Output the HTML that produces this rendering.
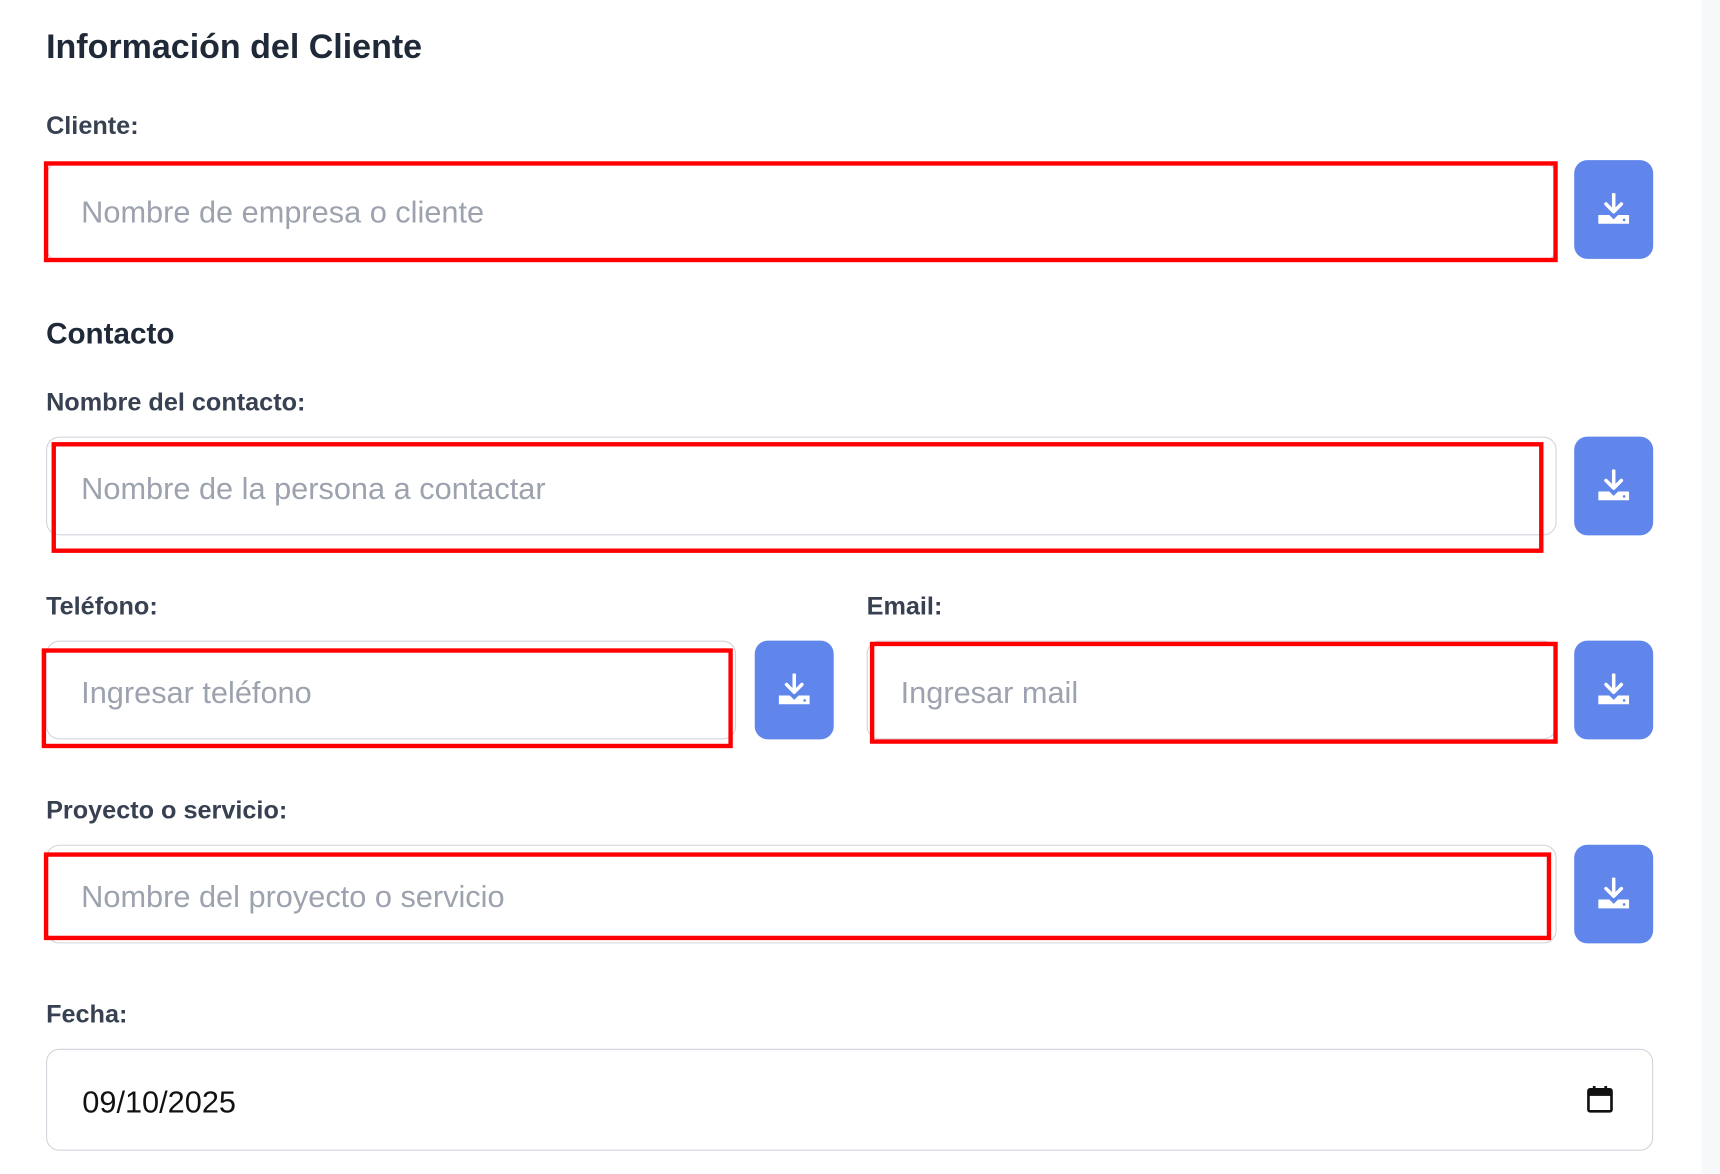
<!DOCTYPE html>
<html><head><meta charset="utf-8"><style>
html,body{margin:0;padding:0;background:#fff;overflow:hidden;width:1720px;height:1168px}
#w{position:absolute;left:0;top:0;width:1568px;height:1065px;transform:scale(1.097);transform-origin:0 0;font-family:"Liberation Sans",sans-serif}
.strip{position:absolute;left:1551px;top:0;width:20px;height:1070px;background:#f7f8fa}
.a{position:absolute}
.h1{font-size:31px;font-weight:600;color:#1f2937}
.h2{font-size:27px;font-weight:600;color:#1f2937}
.lb{font-size:23px;font-weight:600;color:#374151}
.in{position:absolute;border:1.5px solid #d1d5db;border-radius:12px;box-sizing:border-box;background:#fff}
.ph{position:absolute;font-size:28px;color:#9ca3af}
.red{position:absolute;border:4px solid #ff0000;box-sizing:border-box}
.bt{position:absolute;width:72px;height:90px;border-radius:12px;background:#6086ec}
.bt svg{position:absolute;left:21px;top:30px}
</style></head><body><div id="w">
<div class="strip"></div>
<div class="a h1" style="left:42px;top:25px">Información del Cliente</div>
<div class="a lb" style="left:42px;top:101px">Cliente:</div>
<div class="in" style="left:42px;top:148px;width:1377px;height:90px"></div>
<div class="ph" style="left:74px;top:178px">Nombre de empresa o cliente</div>
<div class="red" style="left:40px;top:147px;width:1380px;height:92px"></div>
<div class="bt" style="left:1435px;top:146px"><svg width="30" height="30" viewBox="0 0 30 30"><path d="M15 1v15M8 10l7 7 7-7" stroke="#fff" stroke-width="3.2" fill="none" stroke-linecap="round" stroke-linejoin="round"/><path d="M1 20h10l4 4 4-4h10v8H1z" fill="#fff"/><circle cx="24.5" cy="24.5" r="1.2" fill="#6086ec"/></svg></div>

<div class="a h2" style="left:42px;top:289px">Contacto</div>
<div class="a lb" style="left:42px;top:353px">Nombre del contacto:</div>
<div class="in" style="left:42px;top:398px;width:1377px;height:90px"></div>
<div class="ph" style="left:74px;top:430px">Nombre de la persona a contactar</div>
<div class="red" style="left:47px;top:403px;width:1360px;height:101px"></div>
<div class="bt" style="left:1435px;top:398px"><svg width="30" height="30" viewBox="0 0 30 30"><path d="M15 1v15M8 10l7 7 7-7" stroke="#fff" stroke-width="3.2" fill="none" stroke-linecap="round" stroke-linejoin="round"/><path d="M1 20h10l4 4 4-4h10v8H1z" fill="#fff"/><circle cx="24.5" cy="24.5" r="1.2" fill="#6086ec"/></svg></div>

<div class="a lb" style="left:42px;top:539px">Teléfono:</div>
<div class="a lb" style="left:790px;top:539px">Email:</div>
<div class="in" style="left:42px;top:584px;width:629px;height:90px"></div>
<div class="ph" style="left:74px;top:616px">Ingresar teléfono</div>
<div class="red" style="left:38px;top:591px;width:630px;height:91px"></div>
<div class="bt" style="left:688px;top:584px"><svg width="30" height="30" viewBox="0 0 30 30"><path d="M15 1v15M8 10l7 7 7-7" stroke="#fff" stroke-width="3.2" fill="none" stroke-linecap="round" stroke-linejoin="round"/><path d="M1 20h10l4 4 4-4h10v8H1z" fill="#fff"/><circle cx="24.5" cy="24.5" r="1.2" fill="#6086ec"/></svg></div>
<div class="in" style="left:790px;top:584px;width:629px;height:90px"></div>
<div class="ph" style="left:821px;top:616px">Ingresar mail</div>
<div class="red" style="left:793px;top:585px;width:627px;height:93px"></div>
<div class="bt" style="left:1435px;top:584px"><svg width="30" height="30" viewBox="0 0 30 30"><path d="M15 1v15M8 10l7 7 7-7" stroke="#fff" stroke-width="3.2" fill="none" stroke-linecap="round" stroke-linejoin="round"/><path d="M1 20h10l4 4 4-4h10v8H1z" fill="#fff"/><circle cx="24.5" cy="24.5" r="1.2" fill="#6086ec"/></svg></div>

<div class="a lb" style="left:42px;top:725px">Proyecto o servicio:</div>
<div class="in" style="left:42px;top:770px;width:1377px;height:90px"></div>
<div class="ph" style="left:74px;top:802px">Nombre del proyecto o servicio</div>
<div class="red" style="left:40px;top:777px;width:1374px;height:80px"></div>
<div class="bt" style="left:1435px;top:770px"><svg width="30" height="30" viewBox="0 0 30 30"><path d="M15 1v15M8 10l7 7 7-7" stroke="#fff" stroke-width="3.2" fill="none" stroke-linecap="round" stroke-linejoin="round"/><path d="M1 20h10l4 4 4-4h10v8H1z" fill="#fff"/><circle cx="24.5" cy="24.5" r="1.2" fill="#6086ec"/></svg></div>

<div class="a lb" style="left:42px;top:911px">Fecha:</div>
<div class="in" style="left:42px;top:956px;width:1465px;height:93px"></div>
<div class="a" style="left:75px;top:989px;font-size:28px;color:#111">09/10/2025</div>
<svg class="a" style="left:1446px;top:989px" width="25" height="26" viewBox="0 0 25 26"><rect x="2" y="4" width="21" height="20" rx="1.5" fill="none" stroke="#111" stroke-width="2.4"/><rect x="2" y="4" width="21" height="6" fill="#111"/><rect x="6" y="1" width="2.5" height="5" fill="#111"/><rect x="16.5" y="1" width="2.5" height="5" fill="#111"/></svg>
</div></body></html>
